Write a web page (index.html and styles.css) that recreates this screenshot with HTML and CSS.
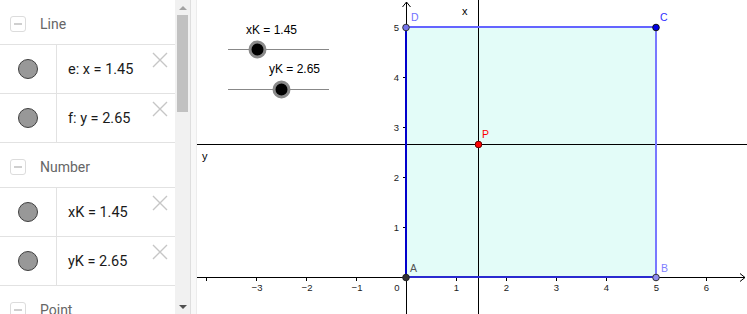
FILE: index.html
```html
<!DOCTYPE html>
<html>
<head>
<meta charset="utf-8">
<link rel="stylesheet" href="styles.css">
</head>
<body>
<div class="app">
  <div class="algebra">
    <div class="list">
      <div class="group-header"><span class="toggle"><span class="minus"></span></span><span class="group-title">Line</span></div>
      <div class="row">
        <div class="marble-cell"><span class="marble"></span></div>
        <div class="expr">e: x = 1.45</div>
        <svg class="close" viewBox="0 0 16 16"><path d="M1 1 L15 15 M15 1 L1 15"/></svg>
      </div>
      <div class="row">
        <div class="marble-cell"><span class="marble"></span></div>
        <div class="expr">f: y = 2.65</div>
        <svg class="close" viewBox="0 0 16 16"><path d="M1 1 L15 15 M15 1 L1 15"/></svg>
      </div>
      <div class="group-header"><span class="toggle"><span class="minus"></span></span><span class="group-title">Number</span></div>
      <div class="row">
        <div class="marble-cell"><span class="marble"></span></div>
        <div class="expr">xK = 1.45</div>
        <svg class="close" viewBox="0 0 16 16"><path d="M1 1 L15 15 M15 1 L1 15"/></svg>
      </div>
      <div class="row">
        <div class="marble-cell"><span class="marble"></span></div>
        <div class="expr">yK = 2.65</div>
        <svg class="close" viewBox="0 0 16 16"><path d="M1 1 L15 15 M15 1 L1 15"/></svg>
      </div>
      <div class="group-header"><span class="toggle"><span class="minus"></span></span><span class="group-title">Point</span></div>
    </div>
    <div class="scrollbar">
      <div class="sb-btn"><span class="arrow-up"></span></div>
      <div class="sb-track"><div class="sb-thumb"></div></div>
      <div class="sb-btn"><span class="arrow-down"></span></div>
    </div>
  </div>
  <div class="splitter"></div>
  <div class="graphics">
    <svg class="canvas" width="550" height="314" viewBox="197 0 550 314">
      <!-- polygon fill -->
      <rect x="406" y="27" width="250" height="250" fill="#e3fcf8"/>

      <!-- axes -->
      <g stroke="#000" stroke-width="1" fill="none">
        <line x1="197" y1="277.5" x2="745" y2="277.5"/>
        <path d="M740 273.5 L745 277.5 L740 281.5"/>
        <line x1="406.5" y1="314" x2="406.5" y2="2"/>
        <path d="M402.5 7 L406.5 2 L410.5 7"/>
        <!-- x ticks -->
        <path d="M206.5 278 V281 M256.5 278 V281 M306.5 278 V281 M356.5 278 V281 M456.5 278 V281 M506.5 278 V281 M556.5 278 V281 M606.5 278 V281 M656.5 278 V281 M706.5 278 V281"/>
        <!-- y ticks -->
        <path d="M403 227.5 H406 M403 177.5 H406 M403 127.5 H406 M403 77.5 H406 M403 27.5 H406"/>
      </g>

      <!-- tick labels -->
      <g class="tick-label" text-anchor="middle">
        <text x="257" y="291">−3</text>
        <text x="307" y="291">−2</text>
        <text x="357" y="291">−1</text>
        <text x="397" y="291">0</text>
        <text x="456.5" y="291">1</text>
        <text x="506.5" y="291">2</text>
        <text x="556.5" y="291">3</text>
        <text x="606.5" y="291">4</text>
        <text x="656.5" y="291">5</text>
        <text x="706.5" y="291">6</text>
      </g>
      <g class="tick-label" text-anchor="end">
        <text x="399" y="231">1</text>
        <text x="399" y="181">2</text>
        <text x="399" y="131">3</text>
        <text x="399" y="81">4</text>
        <text x="399" y="31">5</text>
      </g>

      <!-- lines e and f -->
      <line x1="478.5" y1="0" x2="478.5" y2="314" stroke="#000" stroke-width="1"/>
      <line x1="197" y1="144.5" x2="747" y2="144.5" stroke="#000" stroke-width="1"/>
      <text class="line-label" x="462" y="15">x</text>
      <text class="line-label" x="202" y="160">y</text>

      <!-- polygon edges -->
      <line x1="406" y1="27" x2="656" y2="27" stroke="#6464ff" stroke-width="2"/>
      <line x1="656" y1="27" x2="656" y2="277" stroke="#7878ff" stroke-width="2"/>
      <line x1="406" y1="277" x2="656" y2="277" stroke="#2a2ad0" stroke-width="2"/>
      <line x1="406" y1="27" x2="406" y2="277" stroke="#0000cc" stroke-width="2"/>

      <!-- points -->
      <circle cx="406" cy="27.5" r="3.3" fill="#7474ec" stroke="#333" stroke-width="1"/>
      <circle cx="656" cy="27.5" r="3.3" fill="#0000e6" stroke="#111" stroke-width="1"/>
      <circle cx="656" cy="277.5" r="3.3" fill="#8c8cee" stroke="#333" stroke-width="1"/>
      <circle cx="406" cy="277.5" r="3.3" fill="#333" stroke="#222" stroke-width="1"/>
      <circle cx="478.5" cy="144.5" r="3.3" fill="#ff0000" stroke="#660000" stroke-width="1"/>

      <!-- point labels -->
      <text class="pt-label" x="411" y="21" fill="#7070ff">D</text>
      <text class="pt-label" x="660" y="21" fill="#3030ff">C</text>
      <text class="pt-label" x="661" y="272" fill="#8080ff">B</text>
      <text class="pt-label" x="410" y="272" fill="#555">A</text>
      <text class="pt-label" x="482" y="138" fill="#ff0000">P</text>

      <!-- sliders -->
      <text class="slider-label" x="246" y="34">xK = 1.45</text>
      <line x1="228" y1="49.5" x2="329" y2="49.5" stroke="#888" stroke-width="1"/>
      <circle cx="257.5" cy="49.5" r="7.5" fill="#000" stroke="#8a8a8a" stroke-width="3"/>

      <text class="slider-label" x="269" y="73">yK = 2.65</text>
      <line x1="228" y1="89.5" x2="329" y2="89.5" stroke="#888" stroke-width="1"/>
      <circle cx="281.5" cy="89.5" r="7.5" fill="#000" stroke="#8a8a8a" stroke-width="3"/>
    </svg>
  </div>
</div>
</body>
</html>
```
FILE: styles.css
```css
* { box-sizing: border-box; }
html, body { margin: 0; padding: 0; background: #fff; }
body { width: 747px; height: 314px; overflow: hidden; }

.app {
  display: flex;
  width: 747px;
  height: 314px;
}

.algebra {
  display: flex;
  width: 190px;
  height: 314px;
  flex: none;
}

.list {
  width: 175px;
  height: 314px;
  overflow: hidden;
  font-family: Roboto, "Liberation Sans", sans-serif;
}

.group-header {
  height: 45px;
  padding-top: 4px;
  display: flex;
  align-items: center;
  border-bottom: 1px solid #e2e2e2;
}

.toggle {
  width: 16px;
  height: 16px;
  margin-left: 10px;
  border: 1px solid #dcdcdc;
  border-radius: 3px;
  display: flex;
  align-items: center;
  justify-content: center;
}

.minus {
  width: 8px;
  height: 2px;
  background: #cfcfcf;
}

.group-title {
  margin-left: 14px;
  font-size: 14px;
  color: #666;
}

.row {
  position: relative;
  height: 49px;
  display: flex;
  border-bottom: 1px solid #e2e2e2;
}

.marble-cell {
  width: 57px;
  flex: none;
  border-right: 1px solid #e2e2e2;
  display: flex;
  align-items: center;
  justify-content: center;
  padding-bottom: 1px;
}

.marble {
  width: 20px;
  height: 20px;
  border-radius: 50%;
  background: #989898;
  border: 1px solid #3f3f3f;
}

.expr {
  display: flex;
  align-items: center;
  padding-left: 11px;
  font-size: 14.5px;
  color: #1a1a1a;
  white-space: pre;
}

.close {
  position: absolute;
  top: 7px;
  right: 7px;
  width: 16px;
  height: 16px;
  stroke: #c6c6c6;
  stroke-width: 1.4;
  fill: none;
}

.scrollbar {
  width: 15px;
  height: 314px;
  background: #f1f1f1;
  display: flex;
  flex-direction: column;
}

.sb-btn {
  height: 15px;
  flex: none;
  display: flex;
  align-items: center;
  justify-content: center;
}

.arrow-up {
  width: 0;
  height: 0;
  border-left: 4px solid transparent;
  border-right: 4px solid transparent;
  border-bottom: 4px solid #a3a3a3;
}

.arrow-down {
  width: 0;
  height: 0;
  border-left: 4px solid transparent;
  border-right: 4px solid transparent;
  border-top: 4px solid #505050;
}

.sb-track {
  flex: 1;
  padding: 0 2px;
}

.sb-thumb {
  height: 97px;
  background: #c1c1c1;
}

.splitter {
  width: 7px;
  height: 314px;
  flex: none;
  background: #f8f8f8;
  border-left: 1px solid #dedede;
  border-right: 1px solid #ececec;
}

.graphics {
  width: 550px;
  height: 314px;
  flex: none;
  overflow: hidden;
}

.canvas { display: block; }

.tick-label {
  font-family: "Liberation Sans", Arial, sans-serif;
  font-size: 9.5px;
  fill: #222;
}

.line-label {
  font-family: "Liberation Sans", Arial, sans-serif;
  font-size: 11px;
  fill: #000;
}

.pt-label {
  font-family: "Liberation Sans", Arial, sans-serif;
  font-size: 10.5px;
}

.slider-label {
  font-family: "Liberation Sans", Arial, sans-serif;
  font-size: 12px;
  fill: #000;
}
```
